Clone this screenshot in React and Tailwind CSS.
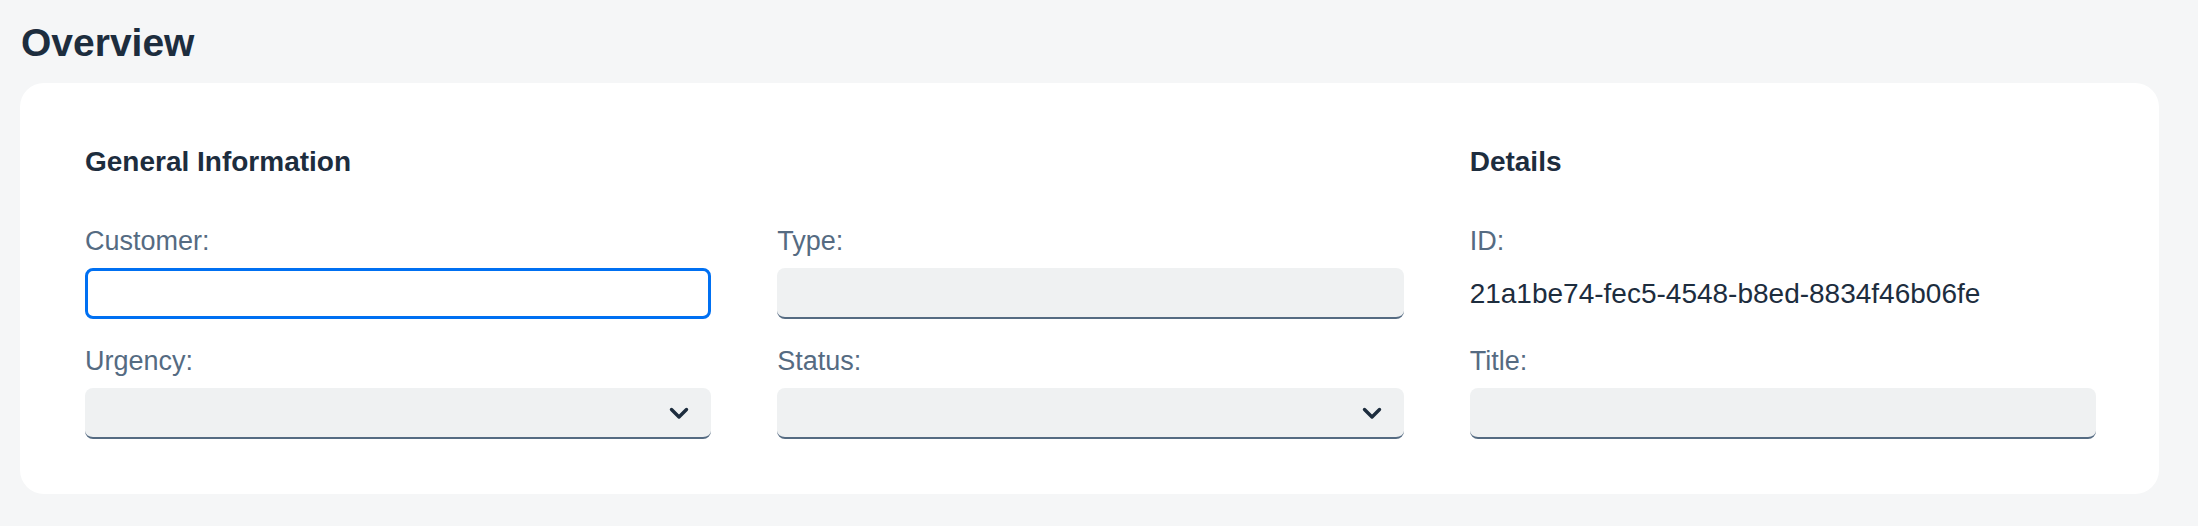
import { useState } from "react";

let font = { fontFamily: '"Liberation Sans", Arial, sans-serif' };

function Chevron() {
  return (
    <svg width="20" height="13" viewBox="0 0 20 13" fill="none">
      <path
        d="M2.5 2.5 L10 10 L17.5 2.5"
        stroke="#1d2d3e"
        strokeWidth="3.4"
        strokeLinecap="round"
        strokeLinejoin="round"
      />
    </svg>
  );
}

function Label({ children }) {
  return (
    <div className="h-[37px] leading-[37px] text-[27px] text-[#556b82] mt-px mb-[8px]">
      {children}
    </div>
  );
}

function TextField({ label, focused, value, onChange }) {
  return (
    <div className="flex flex-col">
      <Label>{label}</Label>
      {focused ? (
        <input
          value={value}
          onChange={onChange}
          className="h-[51px] w-full rounded-[8px] border-[3px] border-[#0070f2] bg-white px-3 text-[27px] text-[#1d2d3e] outline-none"
        />
      ) : (
        <input
          value={value}
          onChange={onChange}
          className="h-[51px] w-full rounded-[8px] border-b-2 border-[#556b82] bg-[#eff1f2] px-3 text-[27px] text-[#1d2d3e] outline-none"
        />
      )}
    </div>
  );
}

function SelectField({ label }) {
  return (
    <div className="flex flex-col">
      <Label>{label}</Label>
      <button className="h-[51px] w-full rounded-[8px] border-b-2 border-[#556b82] bg-[#eff1f2] flex items-center justify-end pr-[22px] pt-[2px]">
        <Chevron />
      </button>
    </div>
  );
}

function Heading({ children }) {
  return (
    <h3 className="h-[36px] leading-[36px] text-[28px] font-bold text-[#1d2d3e] mb-[42px]">
      {children}
    </h3>
  );
}

export default function App() {
  let [customer, setCustomer] = useState("");
  let [type, setType] = useState("");
  let [title, setTitle] = useState("");

  return (
    <div className="min-h-screen bg-[#f5f6f7] pl-[20px] pr-[39px] pt-[19px]" style={font}>
      <h1 className="h-[47px] leading-[47px] text-[39px] font-bold text-[#1d2d3e] mb-[17px] pl-px">
        Overview
      </h1>
      <div className="bg-white rounded-[24px] pt-[61px] pb-[55px] pl-[65px] pr-[63px] grid grid-cols-3 gap-x-[66px]">
        <div className="col-span-2">
          <Heading>General Information</Heading>
          <div className="grid grid-cols-2 gap-x-[66px] gap-y-[23px]">
            <TextField
              label="Customer:"
              focused
              value={customer}
              onChange={(e) => setCustomer(e.target.value)}
            />
            <TextField label="Type:" value={type} onChange={(e) => setType(e.target.value)} />
            <SelectField label="Urgency:" />
            <SelectField label="Status:" />
          </div>
        </div>
        <div>
          <Heading>Details</Heading>
          <div className="flex flex-col gap-y-[23px]">
            <div className="flex flex-col">
              <Label>ID:</Label>
              <div className="h-[51px] flex items-center text-[28px] text-[#1d2d3e]">
                21a1be74-fec5-4548-b8ed-8834f46b06fe
              </div>
            </div>
            <TextField label="Title:" value={title} onChange={(e) => setTitle(e.target.value)} />
          </div>
        </div>
      </div>
    </div>
  );
}
